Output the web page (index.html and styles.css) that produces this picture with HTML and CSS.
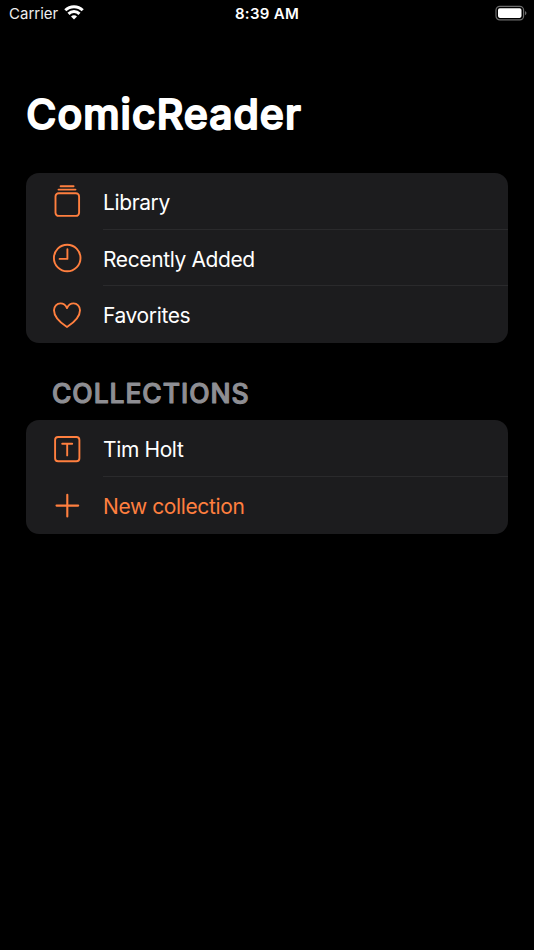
FILE: index.html
```html
<!DOCTYPE html>
<html lang="en">
<head>
<meta charset="utf-8">
<title>ComicReader</title>
<link rel="stylesheet" href="styles.css">
</head>
<body>
<header class="status">
  <div class="carrier"><span>Carrier</span>
    <svg class="wifi" width="20" height="15" viewBox="0 0 20 15" fill="none" stroke="#fff" stroke-width="3">
      <path d="M1.300 5.300a12.400 12.400 0 0 1 17.400 0"/>
      <path d="M4.500 8.900a7.700 7.700 0 0 1 11 0"/>
      <path d="M10 14.600 7 11.500a4.200 4.200 0 0 1 6 0Z" fill="#fff" stroke="none"/>
    </svg>
  </div>
  <time class="clock">8:39 AM</time>
  <svg class="battery" width="32" height="16" viewBox="0 0 32 16">
    <rect x="1" y="1.300" width="27.600" height="13.600" rx="3.800" fill="none" stroke="#6c6c6c" stroke-width="1.200"/>
    <rect x="3" y="3.300" width="23.500" height="9.600" rx="1.800" fill="#fff"/>
    <path d="M30 5.900q1.500.7 1.500 2.200t-1.500 2.200z" fill="#6c6c6c"/>
  </svg>
</header>
<main>
  <h1 class="title"><svg class="rounded" width="300" height="52"><text x="0.300" y="40.700" textLength="274.500">ComicReader</text></svg></h1>
  <ul class="card">
    <li class="row">
      <svg class="icon" viewBox="0 0 34 36"><rect x="5.500" y="10.300" width="23.600" height="22.600" rx="3.200"/><path d="M8.500 6.600h17M10.600 3.200h13"/></svg>
      <span class="label">Library</span>
    </li>
    <li class="row">
      <svg class="icon" viewBox="0 0 34 36"><circle cx="17.200" cy="18" r="13.300"/><path d="M17.400 9.300v9.600H9.600"/></svg>
      <span class="label">Recently Added</span>
    </li>
    <li class="row">
      <svg class="icon" viewBox="0 0 34 36"><path d="M17 30C10.800 26 4 20 4 13.200 4 9.200 6.900 6.400 10.400 6.400c3 0 5.300 1.700 6.600 4.700 1.300-3 3.600-4.700 6.600-4.700 3.500 0 6.400 2.800 6.400 6.800C30 20 23.200 26 17 30Z"/></svg>
      <span class="label">Favorites</span>
    </li>
  </ul>
  <h2 class="section"><svg class="rounded" width="220" height="34"><text x="0" y="25.700" textLength="196.500">COLLECTIONS</text></svg></h2>
  <ul class="card">
    <li class="row">
      <svg class="icon" viewBox="0 0 34 36"><rect x="5.100" y="6" width="24.300" height="24.300" rx="3"/><path d="M12.200 12.800h10M17.200 12.800v11.600"/></svg>
      <span class="label">Tim Holt</span>
    </li>
    <li class="row action">
      <svg class="icon plus" viewBox="0 0 34 36"><path d="M6.500 18.600h21.700M17.300 7.700v21.800"/></svg>
      <span class="label">New collection</span>
    </li>
  </ul>
</main>
</body>
</html>
```
FILE: styles.css
```css
* { box-sizing: border-box; }
body {
  margin: 0;
  min-height: 950px;
  background: #000;
  color: #fff;
  font-family: Inter, "Liberation Sans", sans-serif;
}
.status {
  display: grid;
  grid-template-columns: 1fr auto 1fr;
  align-items: center;
  height: 27px;
  padding: 0 7px 0 9px;
  font-size: 15px;
}
.carrier { display: flex; align-items: center; gap: 6px; color: #eee; }
.wifi { margin-top: -2px; }
.clock { position: relative; left: -1px; font-weight: 600; font-size: 15px; letter-spacing: 0.3px; }
.battery { justify-self: end; margin-top: -1px; }
main { padding: 0 26px; }
.title { margin: 61px 0 0; height: 52px; font-size: 41px; font-weight: 500; }
.rounded {
  display: block;
  overflow: visible;
  fill: currentColor;
  stroke: currentColor;
  stroke-width: 1.9px;
  stroke-linejoin: round;
}
.card {
  margin: 33px 0 0;
  padding: 0;
  list-style: none;
  background: #1c1c1e;
  border-radius: 13px;
  overflow: hidden;
}
.row { display: flex; align-items: center; height: 56.67px; padding-left: 24px; }
.icon {
  flex: none;
  width: 34px;
  height: 36px;
  margin-right: 19px;
  fill: none;
  stroke: #ff7f3f;
  stroke-width: 1.9;
  stroke-linecap: round;
  stroke-linejoin: round;
}
.plus { stroke-width: 2.1; }
.label {
  flex: 1;
  height: 100%;
  font-size: 21px;
  line-height: 59.500px;
  letter-spacing: -0.38px;
}
.row:not(:last-child) .label { border-bottom: 1px solid #2a2a2c; }
.action { color: #ff7f3f; }
.section {
  margin: 34px 0 0 26px;
  height: 34px;
  font-size: 26.500px;
  font-weight: 500;
  color: #8e8e93;
}
.section .rounded { stroke-width: 1.100px; }
.section + .card { margin-top: 9.500px; }
```
